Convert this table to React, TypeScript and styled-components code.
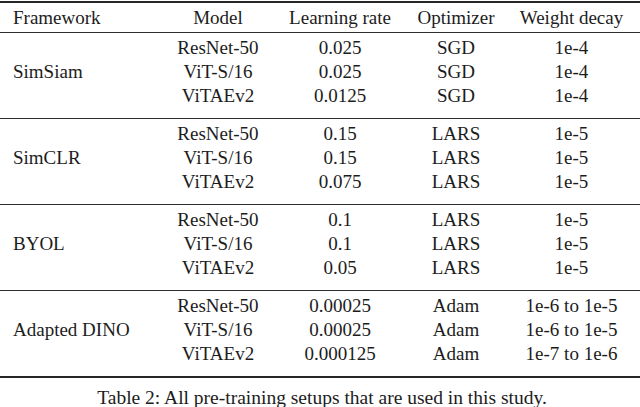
import styled, { createGlobalStyle } from "styled-components";

const GlobalStyle = createGlobalStyle`
  html, body {
    margin: 0;
    padding: 0;
    background: #ffffff;
  }
`;

const SERIF = `"Liberation Serif", "Tinos", "Times New Roman", "Nimbus Roman", "DejaVu Serif", serif`;
const COLUMNS = "160px 116px 128px 104px 1fr";

interface SetupRow {
  model: string;
  lr: string;
  optimizer: string;
  decay: string;
}

interface SetupGroup {
  framework: string;
  rows: SetupRow[];
}

const groups: SetupGroup[] = [
  {
    framework: "SimSiam",
    rows: [
      { model: "ResNet-50", lr: "0.025", optimizer: "SGD", decay: "1e-4" },
      { model: "ViT-S/16", lr: "0.025", optimizer: "SGD", decay: "1e-4" },
      { model: "ViTAEv2", lr: "0.0125", optimizer: "SGD", decay: "1e-4" },
    ],
  },
  {
    framework: "SimCLR",
    rows: [
      { model: "ResNet-50", lr: "0.15", optimizer: "LARS", decay: "1e-5" },
      { model: "ViT-S/16", lr: "0.15", optimizer: "LARS", decay: "1e-5" },
      { model: "ViTAEv2", lr: "0.075", optimizer: "LARS", decay: "1e-5" },
    ],
  },
  {
    framework: "BYOL",
    rows: [
      { model: "ResNet-50", lr: "0.1", optimizer: "LARS", decay: "1e-5" },
      { model: "ViT-S/16", lr: "0.1", optimizer: "LARS", decay: "1e-5" },
      { model: "ViTAEv2", lr: "0.05", optimizer: "LARS", decay: "1e-5" },
    ],
  },
  {
    framework: "Adapted DINO",
    rows: [
      { model: "ResNet-50", lr: "0.00025", optimizer: "Adam", decay: "1e-6 to 1e-5" },
      { model: "ViT-S/16", lr: "0.00025", optimizer: "Adam", decay: "1e-6 to 1e-5" },
      { model: "ViTAEv2", lr: "0.000125", optimizer: "Adam", decay: "1e-7 to 1e-6" },
    ],
  },
];

const Page = styled.div`
  width: 640px;
  height: 407px;
  padding-top: 1px;
  box-sizing: border-box;
  overflow: hidden;
  font-family: ${SERIF};
  color: #1c1c1c;
`;

const Table = styled.div`
  border-top: 2px solid #262626;
  border-bottom: 2px solid #262626;
  font-size: 19px;
`;

const HeaderRow = styled.div`
  display: grid;
  grid-template-columns: ${COLUMNS};
  padding-right: 5px;
  height: 29px;
  align-items: center;
  border-bottom: 1px solid #2e2e2e;
`;

const Group = styled.div<{ $last?: boolean }>`
  display: grid;
  grid-template-columns: ${COLUMNS};
  grid-template-rows: repeat(3, 24px);
  padding: 3px 5px 10px 0;
  align-items: center;
  border-bottom: ${(p) => (p.$last ? "none" : "1px solid #2e2e2e")};
`;

const Cell = styled.div<{ $left?: boolean }>`
  font-family: ${SERIF};
  line-height: 24px;
  white-space: nowrap;
  text-align: ${(p) => (p.$left ? "left" : "center")};
  padding-left: ${(p) => (p.$left ? "13px" : "0")};
`;

const FrameworkCell = styled(Cell)`
  grid-column: 1;
  grid-row: 1 / 4;
  align-self: center;
`;

const Caption = styled.div`
  font-family: ${SERIF};
  text-align: center;
  font-size: 19.5px;
  line-height: 24px;
  padding-top: 8px;
  padding-left: 4px;
`;

function RowCells({ row, index }: { row: SetupRow; index: number }) {
  const gridRow = index + 1;
  return (
    <>
      <Cell style={{ gridColumn: 2, gridRow }}>{row.model}</Cell>
      <Cell style={{ gridColumn: 3, gridRow }}>{row.lr}</Cell>
      <Cell style={{ gridColumn: 4, gridRow }}>{row.optimizer}</Cell>
      <Cell style={{ gridColumn: 5, gridRow }}>{row.decay}</Cell>
    </>
  );
}

export default function App() {
  return (
    <Page>
      <GlobalStyle />
      <Table>
        <HeaderRow>
          <Cell $left>Framework</Cell>
          <Cell>Model</Cell>
          <Cell>Learning rate</Cell>
          <Cell>Optimizer</Cell>
          <Cell>Weight decay</Cell>
        </HeaderRow>
        {groups.map((g, gi) => (
          <Group key={g.framework} $last={gi === groups.length - 1}>
            <FrameworkCell $left>{g.framework}</FrameworkCell>
            {g.rows.map((r, ri) => (
              <RowCells key={ri} row={r} index={ri} />
            ))}
          </Group>
        ))}
      </Table>
      <Caption>Table 2: All pre-training setups that are used in this study.</Caption>
    </Page>
  );
}
